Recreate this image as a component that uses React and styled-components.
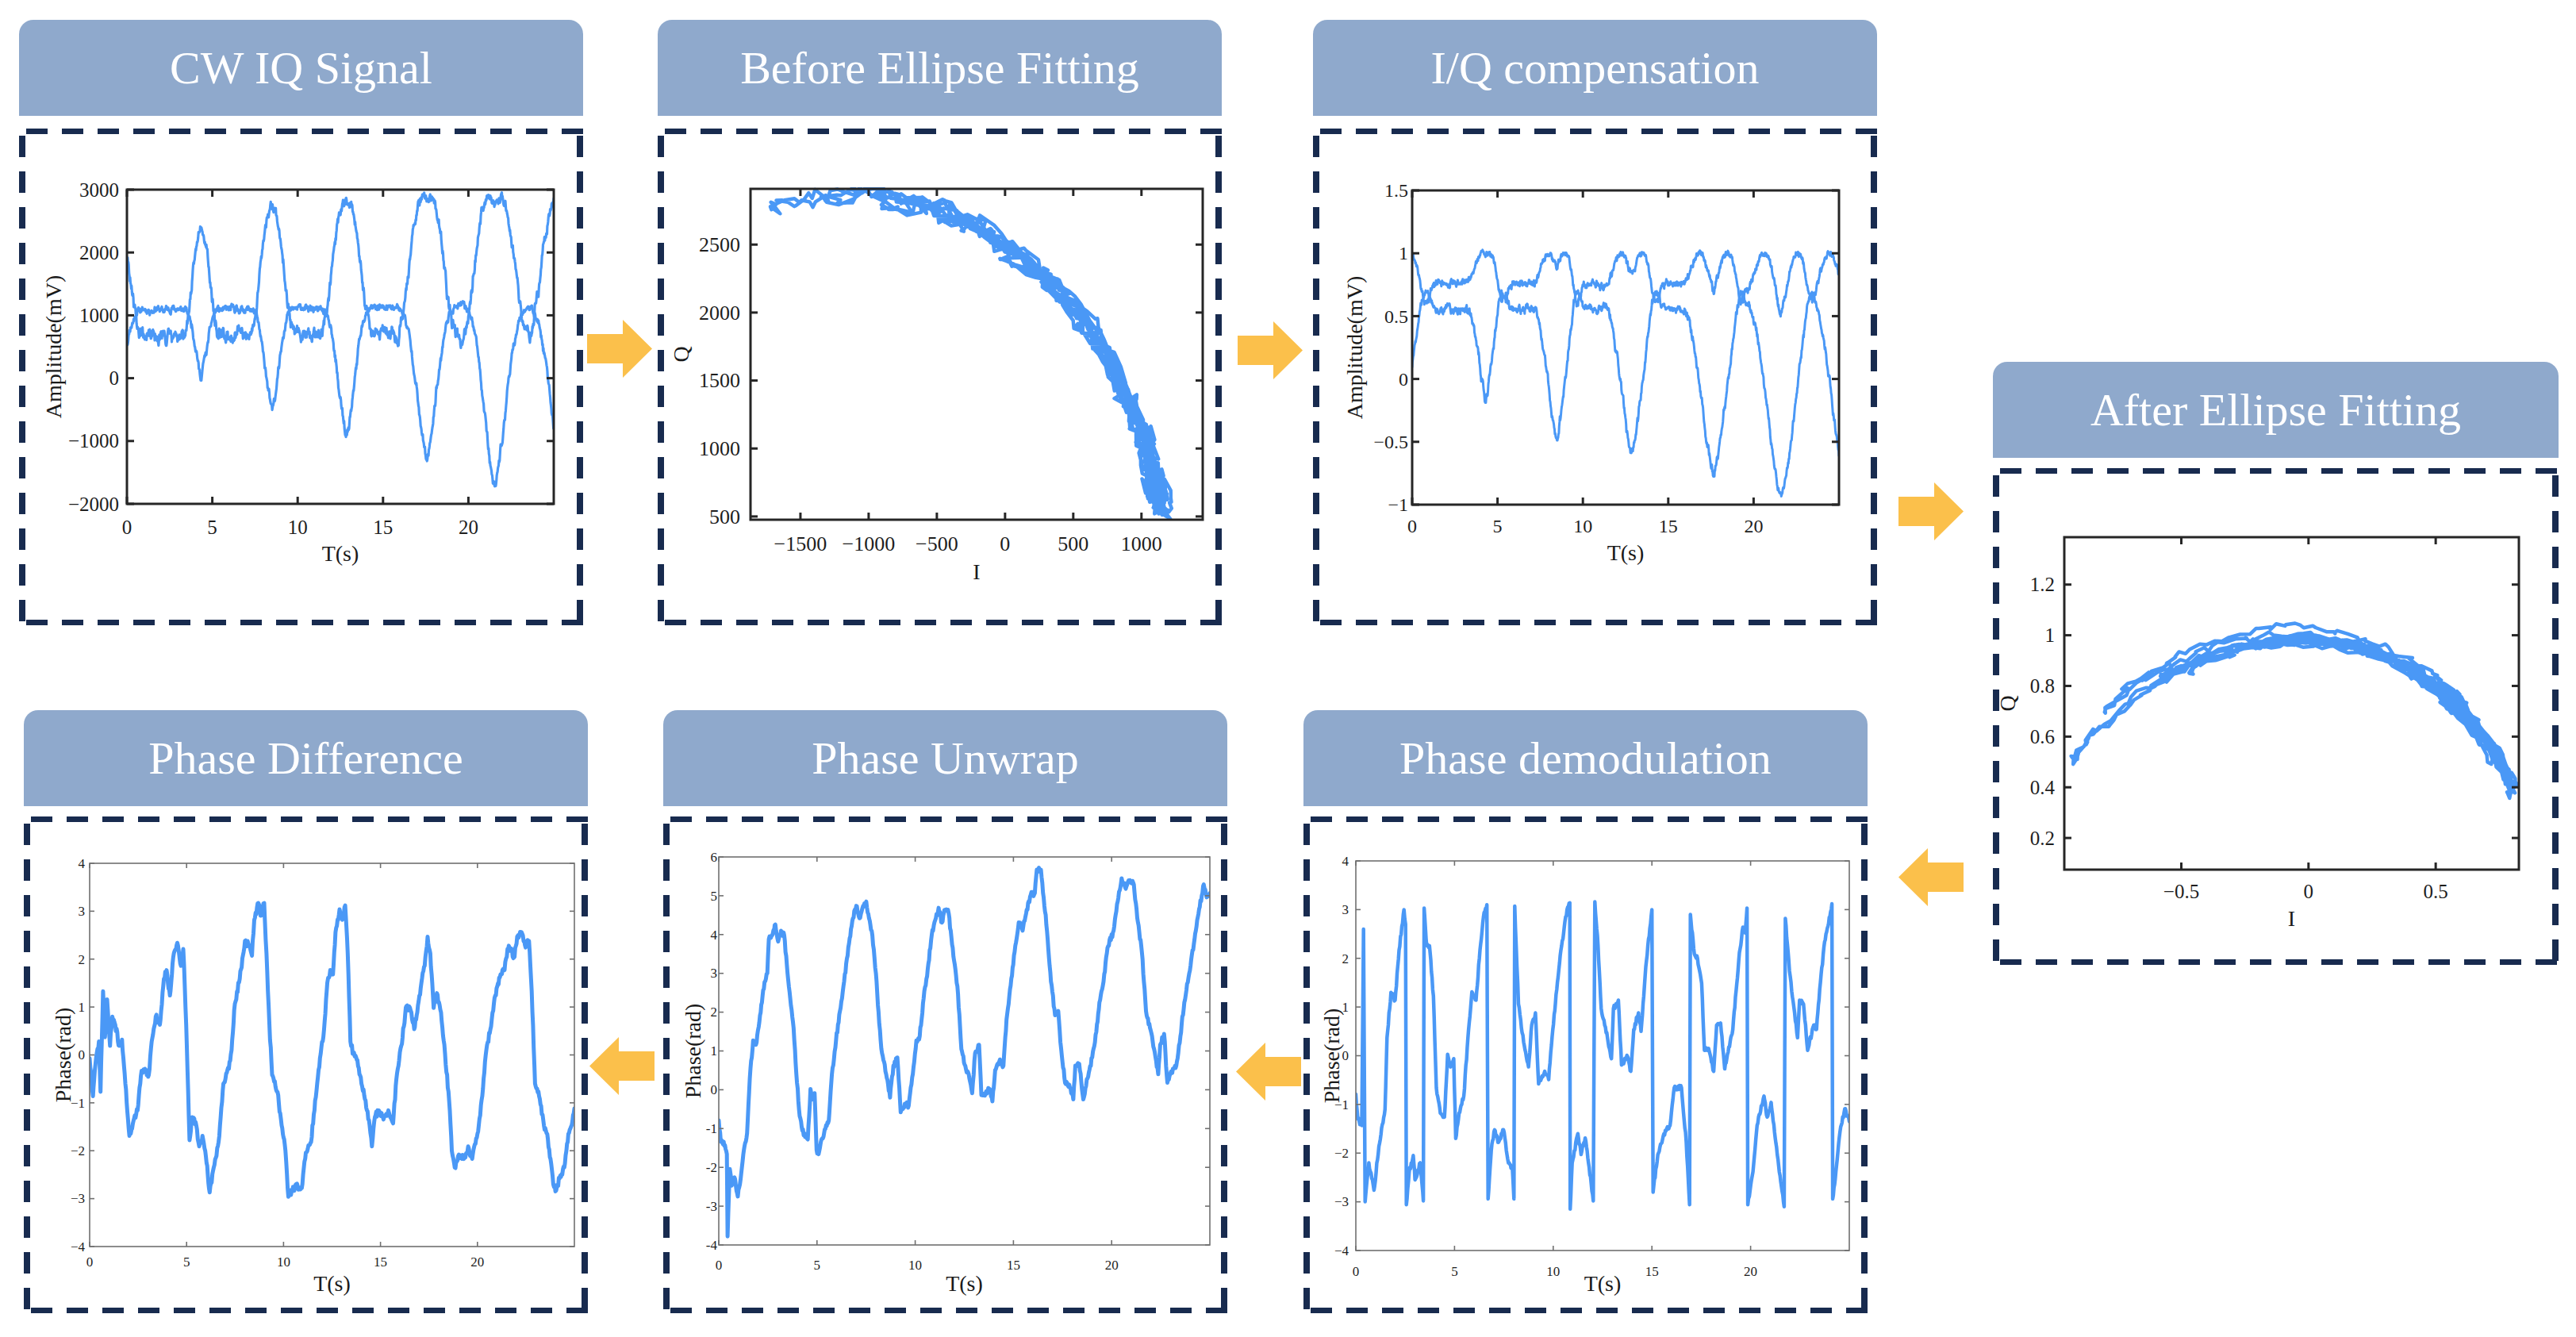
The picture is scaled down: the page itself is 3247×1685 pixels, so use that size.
import React from 'react';
import styled, { createGlobalStyle } from 'styled-components';

const NAVY = '#182b4f';
const BLUE = '#4a98f6';
const AMBER = '#fbc04b';
const HEAD = '#8fa9cc';

const GlobalStyle = createGlobalStyle`
  html, body { margin: 0; padding: 0; background: #fff; }
  body { font-family: "Liberation Serif", "Times New Roman", serif; }
`;

// ---------- data helpers ----------
const rand = (seed) => {
  let s = seed >>> 0;
  return () => {
    s = (Math.imul(s, 1664525) + 1013904223) >>> 0;
    return s / 4294967296;
  };
};

// AR(1) noise, roughly unit std
function ar(n, seed, a) {
  const r = rand(seed);
  let v = 0;
  const out = new Array(n);
  for (let i = 0; i < n; i++) {
    v = a * v + (r() * 2 - 1);
    out[i] = (v * Math.sqrt(1 - a * a)) / 0.577;
  }
  return out;
}

const bump = (x, w) => {
  const u = Math.abs(x) / w;
  return u >= 1 ? 0 : Math.pow(1 - Math.pow(u, 1.4), 1.8);
};

const deg = Math.PI / 180;
const N = 1200;
const T = Array.from({ length: N }, (_, i) => (25 * i) / (N - 1));

// raw IQ (CW IQ Signal)
const P1_PULSES = [
  [-0.4, 60, 1.2], [4.35, 61, 1.05], [8.5, 76, 1.3], [12.85, 86, 1.5],
  [17.55, 95, 1.75], [21.55, 106, 1.9], [25.45, 104, 1.9],
];

function buildRaw() {
  const nA = ar(N, 11, 0.6), nB = ar(N, 23, 0.55), nR = ar(N, 37, 0.997), nS = ar(N, 41, 0.85);
  const I = [], Q = [], IQ = [];
  T.forEach((t, i) => {
    let psi = 14;
    P1_PULSES.forEach(([c, m, w]) => { psi += (m - 14) * bump(t - c, w); });
    psi += nS[i] * 1.2;
    const R = 1 + 0.012 * nR[i];
    const iv = -1080 + 2250 * R * Math.cos(psi * deg) + nA[i] * 28;
    const qv = 2830 * R * Math.sin(psi * deg) + nB[i] * 40;
    I.push([t, iv]);
    Q.push([t, qv]);
    IQ.push([iv, qv]);
  });
  return { I, Q, IQ };
}

// compensated IQ
const BASE = 50;
const P3_PULSES = [
  [-0.45, 100, 1.3], [4.3, 95, 1.05], [8.45, 115, 1.3], [12.85, 124, 1.5],
  [17.65, 134, 1.75], [21.6, 149, 1.9], [25.45, 146, 1.9],
];

function theta(t, dip) {
  let th = BASE;
  P3_PULSES.forEach(([c, m, w]) => {
    th += (m - BASE) * bump(t - c, w);
    th -= dip * Math.exp(-(((t - (c + w * 0.9)) / 0.35) ** 2));
  });
  return th;
}

function buildComp() {
  const n1 = ar(N, 53, 0.8), n2 = ar(N, 59, 0.5), n3 = ar(N, 61, 0.5), nR = ar(N, 67, 0.997);
  const I = [], Q = [], arc = [];
  T.forEach((t, i) => {
    const th = (theta(t, 12) + n1[i] * 1.3) * deg;
    const a = 0.94 + 0.1 * Math.max(0, -Math.cos(th));
    I.push([t, -0.05 + a * Math.cos(th) + n2[i] * 0.012]);
    Q.push([t, -0.02 + 1.02 * Math.sin(th) + n3[i] * 0.012]);
    const ph = (theta(t, 26) + n1[i] * 1.3) * deg;
    const R = 1 + 0.018 * nR[i];
    const b = 0.94 + 0.14 * Math.max(0, -Math.cos(ph));
    arc.push([-0.04 + b * R * Math.cos(ph) + n2[i] * 0.008, -0.02 + 1.02 * R * Math.sin(ph) + n3[i] * 0.008]);
  });
  return { I, Q, arc };
}

function densify(kp, seed, amp) {
  const r = rand(seed);
  const out = [];
  for (let k = 0; k < kp.length - 1; k++) {
    const [t0, v0] = kp[k];
    const [t1, v1] = kp[k + 1];
    const steps = Math.max(1, Math.round(Math.abs(t1 - t0) / 0.035));
    for (let s = 0; s < steps; s++) {
      const f = s / steps;
      out.push([t0 + (t1 - t0) * f, v0 + (v1 - v0) * f + (s ? (r() * 2 - 1) * amp : 0)]);
    }
  }
  out.push(kp[kp.length - 1]);
  return out;
}

const DIFF_KP = [
  [0, -0.07], [0.17, -0.86], [0.33, -0.07], [0.48, 0.28], [0.56, -0.77], [0.69, 1.33], [0.79, 0.37], [0.9, 1.16],
  [1.05, 0.19], [1.17, 0.8], [1.32, 0.63], [1.53, 0.19], [1.67, 0.32], [1.84, -0.6], [2.05, -1.69], [2.26, -1.38],
  [2.47, -1.16], [2.68, -0.33], [2.85, -0.29], [3.05, -0.42], [3.2, 0.28], [3.41, 0.8], [3.62, 0.63], [3.83, 1.59],
  [3.97, 1.77], [4.14, 1.24], [4.31, 2.03], [4.52, 2.34], [4.71, 1.86], [4.83, 2.21], [4.98, 0.63], [5.15, -1.78],
  [5.29, -1.3], [5.5, -1.47], [5.65, -1.91], [5.82, -1.69], [6.03, -2.26], [6.19, -2.87], [6.4, -2.35], [6.65, -1.82],
  [6.9, -0.6], [7.18, -0.29], [7.32, 0.1], [7.49, 1.07], [7.74, 1.59], [8.01, 2.38], [8.22, 2.29], [8.37, 2.07],
  [8.49, 2.82], [8.7, 3.17], [8.85, 2.91], [9.0, 3.17], [9.12, 2.12], [9.27, 0.63], [9.41, -0.42], [9.69, -0.77],
  [9.9, -1.47], [10.1, -2.0], [10.25, -2.96], [10.42, -2.83], [10.73, -2.74], [10.94, -2.78], [11.15, -2.04],
  [11.42, -1.82], [11.63, -0.95], [11.88, -0.07], [12.09, 0.54], [12.26, 1.51], [12.41, 1.77], [12.55, 1.68],
  [12.68, 2.56], [12.89, 3.04], [13.03, 2.82], [13.18, 3.12], [13.31, 2.12], [13.45, 0.28], [13.6, 0.02],
  [13.81, -0.11], [14.02, -0.6], [14.23, -0.95], [14.44, -1.47], [14.56, -1.91], [14.71, -1.3], [14.92, -1.16],
  [15.19, -1.3], [15.44, -1.21], [15.65, -1.43], [15.82, -0.51], [16.07, 0.19], [16.34, 1.02], [16.59, 0.89],
  [16.74, 0.54], [16.9, 0.89], [17.11, 1.51], [17.28, 1.86], [17.43, 2.47], [17.57, 2.12], [17.74, 0.98],
  [17.91, 1.29], [18.12, 0.89], [18.33, 0.02], [18.54, -0.95], [18.68, -2.0], [18.83, -2.35], [19.04, -2.08],
  [19.31, -2.17], [19.52, -1.91], [19.73, -2.17], [20.0, -1.65], [20.25, -0.86], [20.46, 0.1], [20.67, 0.54],
  [20.92, 1.24], [21.19, 1.68], [21.4, 1.77], [21.55, 2.21], [21.72, 2.21], [21.88, 2.03], [22.05, 2.47],
  [22.24, 2.56], [22.45, 2.29], [22.66, 2.38], [22.8, 1.33], [22.97, -0.6], [23.18, -0.86], [23.43, -1.47],
  [23.6, -1.65], [23.77, -2.17], [23.91, -2.7], [24.06, -2.83], [24.27, -2.52], [24.48, -2.35], [24.69, -1.65],
  [24.9, -1.38], [25.0, -1.12],
];

const UNWRAP_KP = [
  [0, -0.79], [0.1, -1.34], [0.25, -1.34], [0.41, -1.66], [0.45, -3.78], [0.56, -2.04], [0.66, -2.47], [0.8, -2.26],
  [0.97, -2.75], [1.11, -2.31], [1.28, -1.55], [1.44, -1.12], [1.58, 0.29], [1.75, 1.27], [1.89, 1.16], [2.1, 1.92],
  [2.26, 2.57], [2.47, 3.0], [2.55, 3.88], [2.72, 3.98], [2.88, 4.26], [3.02, 3.82], [3.17, 4.1], [3.33, 3.98],
  [3.5, 3.0], [3.64, 2.35], [3.81, 1.6], [3.95, 0.4], [4.12, -0.68], [4.32, -1.17], [4.53, -1.28], [4.67, 0.02],
  [4.77, -0.25], [4.88, -0.09], [4.98, -1.55], [5.08, -1.66], [5.23, -1.28], [5.43, -1.01], [5.6, -0.79],
  [5.76, 0.4], [5.97, 1.27], [6.17, 2.03], [6.38, 2.79], [6.63, 3.77], [6.83, 4.42], [7.0, 4.74], [7.16, 4.42],
  [7.35, 4.74], [7.51, 4.85], [7.65, 4.42], [7.82, 3.98], [8.0, 3.0], [8.17, 1.7], [8.31, 0.94], [8.52, 0.4],
  [8.72, -0.2], [8.89, 0.62], [9.09, 0.83], [9.26, -0.58], [9.47, -0.36], [9.67, -0.41], [9.88, 0.4], [10.06, 1.27],
  [10.23, 1.38], [10.43, 2.35], [10.64, 3.11], [10.84, 3.98], [11.05, 4.42], [11.19, 4.69], [11.36, 4.31],
  [11.52, 4.64], [11.67, 4.64], [11.81, 4.1], [11.98, 3.33], [12.18, 2.46], [12.35, 1.05], [12.55, 0.62],
  [12.76, 0.29], [12.9, -0.09], [13.05, 0.94], [13.25, 1.16], [13.37, -0.14], [13.58, -0.09], [13.79, 0.02],
  [13.93, -0.3], [14.07, 0.51], [14.28, 0.73], [14.49, 0.62], [14.65, 1.81], [14.86, 2.68], [15.06, 3.55],
  [15.27, 4.31], [15.47, 4.1], [15.68, 4.64], [15.88, 5.02], [16.09, 5.07], [16.19, 5.67], [16.4, 5.67],
  [16.54, 4.96], [16.71, 4.1], [16.91, 2.79], [17.12, 1.92], [17.28, 2.03], [17.43, 1.05], [17.63, 0.18],
  [17.84, 0.13], [18.05, -0.25], [18.15, 0.62], [18.35, 0.67], [18.56, -0.25], [18.77, 0.29], [19.01, 0.83],
  [19.22, 1.49], [19.38, 2.25], [19.59, 2.79], [19.79, 3.66], [20.1, 4.1], [20.31, 4.85], [20.51, 5.45],
  [20.72, 5.18], [20.93, 5.4], [21.13, 5.29], [21.34, 4.31], [21.54, 3.55], [21.75, 2.03], [21.95, 1.6],
  [22.16, 1.05], [22.37, 0.4], [22.47, 1.16], [22.67, 1.44], [22.84, 0.18], [23.05, 0.45], [23.29, 0.62],
  [23.5, 1.38], [23.7, 2.25], [23.95, 3.0], [24.22, 3.88], [24.42, 4.53], [24.69, 5.29], [24.84, 4.96], [25.0, 5.07],
];

const DEMOD_KP = [
  [0, -0.79], [0.1, -1.3], [0.3, -1.43], [0.39, 2.6], [0.47, -3.0], [0.66, -2.2], [0.92, -2.76], [1.17, -1.86],
  [1.48, -1.1], [1.58, 0.37], [1.78, 1.3], [1.99, 1.14], [2.19, 2.17], [2.44, 3.0], [2.52, 2.7], [2.56, -3.06],
  [2.7, -2.4], [2.91, -2.05], [3.0, -2.55], [3.26, -2.2], [3.42, -2.98], [3.46, 3.03], [3.59, 2.26], [3.73, 2.26],
  [3.93, 1.23], [4.08, -0.66], [4.28, -1.18], [4.49, -1.26], [4.65, 0.03], [4.8, -0.23], [4.96, -0.06], [5.06, -1.7],
  [5.23, -1.18], [5.47, -0.83], [5.68, 0.37], [5.88, 1.31], [6.09, 1.14], [6.29, 2.17], [6.5, 2.94], [6.64, 3.1],
  [6.7, -2.94], [6.86, -1.95], [7.03, -1.52], [7.23, -1.78], [7.48, -1.52], [7.73, -2.2], [7.93, -2.3], [8.01, -2.94],
  [8.05, 3.07], [8.24, 1.06], [8.5, 0.28], [8.75, -0.23], [8.91, 0.63], [9.1, 0.88], [9.26, -0.58], [9.57, -0.32],
  [9.77, -0.49], [9.98, 0.54], [10.18, 1.36], [10.39, 2.17], [10.7, 3.0], [10.84, 3.14], [10.86, -3.15],
  [10.96, -2.2], [11.25, -1.6], [11.41, -2.03], [11.62, -1.69], [11.82, -2.29], [12.03, -2.98], [12.11, 3.16],
  [12.27, 2.26], [12.43, 0.97], [12.75, 0.37], [12.95, -0.06], [13.05, 0.97], [13.3, 1.14], [13.46, -0.19],
  [13.77, -0.02], [13.93, -0.32], [14.08, 0.54], [14.32, 0.88], [14.45, 0.5], [14.69, 1.83], [15.0, 3.0],
  [15.06, -2.8], [15.3, -2.03], [15.61, -1.6], [15.92, -1.43], [16.13, -0.66], [16.5, -0.66], [16.74, -1.78],
  [16.91, -3.06], [16.95, 2.9], [17.15, 2.09], [17.31, 2.0], [17.52, 1.49], [17.66, 0.11], [17.87, 0.15],
  [18.13, -0.32], [18.28, 0.63], [18.48, 0.67], [18.69, -0.27], [19.1, 0.54], [19.4, 1.96], [19.61, 2.64],
  [19.73, 2.52], [19.82, 3.03], [19.86, -3.06], [20.12, -2.38], [20.33, -1.43], [20.68, -0.83], [20.84, -1.26],
  [21.04, -0.96], [21.35, -2.03], [21.7, -3.1], [21.76, 2.82], [21.97, 1.74], [22.23, 0.88], [22.38, 0.37],
  [22.48, 1.14], [22.68, 1.06], [22.89, 0.11], [23.2, 0.63], [23.34, 0.54], [23.5, 1.36], [23.75, 2.34],
  [24.02, 2.86], [24.12, 3.12], [24.16, -2.94], [24.32, -2.38], [24.53, -1.56], [24.77, -1.09], [25.0, -1.35],
];

const RAW = buildRaw();
const COMP = buildComp();

const fmtM = (v) => String(v).replace('-', '\u2212');
const fmtH = (v) => String(v);

const CHARTS = {
  cw: {
    id: 'c-cw', w: 711, h: 626, plot: [136, 77, 674, 473], xlim: [0, 25], ylim: [-2000, 3000],
    xticks: [0, 5, 10, 15, 20], yticks: [-2000, -1000, 0, 1000, 2000, 3000], fmt: fmtM,
    series: [RAW.I, RAW.Q], lw: 3.2, tickFont: 25, labelFont: 28, xtDy: 38, ytDx: 10, xlDy: 72, ylDx: 92,
    xlabel: 'T(s)', ylabel: 'Amplitude(mV)',
  },
  before: {
    id: 'c-before', w: 711, h: 626, plot: [117, 76, 687, 493], xlim: [-1866, 1449], ylim: [476, 2910],
    xticks: [-1500, -1000, -500, 0, 500, 1000], yticks: [500, 1000, 1500, 2000, 2500], fmt: fmtM,
    series: [RAW.IQ], lw: 4.5, tickFont: 26, labelFont: 28, xtDy: 39, ytDx: 13, xlDy: 75, ylDx: 87,
    xlabel: 'I', ylabel: 'Q',
  },
  comp: {
    id: 'c-comp', w: 711, h: 626, plot: [125, 78, 663, 474], xlim: [0, 25], ylim: [-1, 1.5],
    xticks: [0, 5, 10, 15, 20], yticks: [-1, -0.5, 0, 0.5, 1, 1.5], fmt: fmtM,
    series: [COMP.I, COMP.Q], lw: 3, tickFont: 24, labelFont: 28, xtDy: 35, ytDx: 5, xlDy: 70, ylDx: 72,
    xlabel: 'T(s)', ylabel: 'Amplitude(mV)',
  },
  after: {
    id: 'c-after', w: 713, h: 626, plot: [90, 87, 663, 506], xlim: [-0.96, 0.827], ylim: [0.075, 1.387],
    xticks: [-0.5, 0, 0.5], yticks: [0.2, 0.4, 0.6, 0.8, 1, 1.2], fmt: fmtM,
    series: [COMP.arc], lw: 4.5, tickFont: 25, labelFont: 28, xtDy: 36, ytDx: 12, xlDy: 71, ylDx: 71,
    xlabel: 'I', ylabel: 'Q',
  },
  diff: {
    id: 'c-diff', w: 711, h: 626, plot: [83, 59, 694, 542], xlim: [0, 25], ylim: [-4, 4], thin: true,
    xticks: [0, 5, 10, 15, 20], yticks: [-4, -3, -2, -1, 0, 1, 2, 3, 4], fmt: fmtM,
    series: [densify(DIFF_KP, 71, 0.07)], lw: 5, tickFont: 17, labelFont: 28, xtDy: 25, ytDx: 6, xlDy: 56, ylDx: 33,
    xlabel: 'T(s)', ylabel: 'Phase(rad)',
  },
  unwrap: {
    id: 'c-unwrap', w: 711, h: 626, plot: [70, 51, 689, 540], xlim: [0, 25], ylim: [-4, 6], thin: true,
    xticks: [0, 5, 10, 15, 20], yticks: [-4, -3, -2, -1, 0, 1, 2, 3, 4, 5, 6], fmt: fmtH,
    series: [densify(UNWRAP_KP, 73, 0.07)], lw: 5, tickFont: 17, labelFont: 28, xtDy: 31, ytDx: 2, xlDy: 58, ylDx: 32,
    xlabel: 'T(s)', ylabel: 'Phase(rad)',
  },
  demod: {
    id: 'c-demod', w: 711, h: 626, plot: [66, 56, 688, 547], xlim: [0, 25], ylim: [-4, 4], thin: true,
    xticks: [0, 5, 10, 15, 20], yticks: [-4, -3, -2, -1, 0, 1, 2, 3, 4], fmt: fmtM,
    series: [densify(DEMOD_KP, 79, 0.05)], lw: 4.5, tickFont: 17, labelFont: 28, xtDy: 32, ytDx: 9, xlDy: 51, ylDx: 30,
    xlabel: 'T(s)', ylabel: 'Phase(rad)',
  },
};

// ---------- layout ----------
const Page = styled.main`
  width: 3247px;
  height: 1685px;
  box-sizing: border-box;
  padding: 25px 0 0 24px;
  display: grid;
  grid-template-columns: 711px 94px 711px 115px 711px 146px 713px;
  grid-template-rows: 763px 760px;
  row-gap: 107px;
  background: #fff;
`;

const PanelWrap = styled.section`
  grid-column: ${(p) => p.$col};
  grid-row: ${(p) => p.$row};
  align-self: start;
  margin: ${(p) => p.$top || 0}px 0 0 ${(p) => p.$shift || 0}px;
  width: ${(p) => p.$w}px;
  display: flex;
  flex-direction: column;
  gap: ${(p) => p.$gap}px;
`;

const Header = styled.header`
  height: 121px;
  background: ${HEAD};
  border-radius: 18px 18px 0 0;
  display: flex;
  align-items: center;
  justify-content: center;
  color: #fff;
  font-family: "Liberation Serif", "Times New Roman", serif;
  font-size: 58px;
  white-space: nowrap;
`;

const dashH = `repeating-linear-gradient(90deg, transparent 0 9px, ${NAVY} 9px 36px, transparent 36px 45px)`;
const dashV = `repeating-linear-gradient(180deg, transparent 0 9px, ${NAVY} 9px 36px, transparent 36px 45px)`;

const DashBox = styled.div`
  height: 626px;
  background:
    ${dashH} left top / 100% 7px no-repeat,
    ${dashH} left bottom / 100% 7px no-repeat,
    ${dashV} left top / 8px 100% no-repeat,
    ${dashV} right top / 8px 100% no-repeat;
`;

const ArrowSlot = styled.div`
  grid-column: ${(p) => p.$col};
  grid-row: ${(p) => p.$row};
  display: flex;
  flex-direction: column;
  align-items: flex-start;
  padding: ${(p) => p.$top}px 0 0 ${(p) => p.$left}px;
  gap: ${(p) => p.$gap || 0}px;
`;

const ChartSvg = styled.svg`
  display: block;
  font-family: "Liberation Serif", "Times New Roman", serif;
`;

function Arrow({ dir }) {
  const pts = dir === 'right'
    ? '0,18 45,18 45,0 82,36.5 45,73 45,55 0,55'
    : '82,18 37,18 37,0 0,36.5 37,73 37,55 82,55';
  return (
    <svg width="82" height="73" viewBox="0 0 82 73">
      <polygon points={pts} fill={AMBER} />
    </svg>
  );
}

const toPath = (pts, sx, sy) =>
  pts.map(([x, y], i) => `${i ? 'L' : 'M'}${sx(x).toFixed(1)} ${sy(y).toFixed(1)}`).join('');

function Chart({ c }) {
  const [x0, y0, x1, y1] = c.plot;
  const sx = (v) => x0 + ((v - c.xlim[0]) / (c.xlim[1] - c.xlim[0])) * (x1 - x0);
  const sy = (v) => y1 - ((v - c.ylim[0]) / (c.ylim[1] - c.ylim[0])) * (y1 - y0);
  const axisColor = c.thin ? '#707070' : '#262626';
  const aw = c.thin ? 1.6 : 3;
  const tk = c.thin ? 6 : 9;
  const ylx = x0 - c.ylDx + c.labelFont * 0.33;
  return (
    <ChartSvg width={c.w} height={c.h}>
      <defs>
        <clipPath id={c.id}>
          <rect x={x0} y={y0 - 2} width={x1 - x0} height={y1 - y0 + 2} />
        </clipPath>
      </defs>
      <g clipPath={`url(#${c.id})`} fill="none" stroke={BLUE} strokeWidth={c.lw} strokeLinejoin="round" strokeLinecap="round">
        {c.series.map((s, i) => <path key={i} d={toPath(s, sx, sy)} />)}
      </g>
      <g stroke={axisColor} strokeWidth={aw} fill="none">
        <rect x={x0} y={y0} width={x1 - x0} height={y1 - y0} />
        {c.xticks.map((v) => (
          <g key={`x${v}`}>
            <line x1={sx(v)} x2={sx(v)} y1={y1} y2={y1 - tk} />
            <line x1={sx(v)} x2={sx(v)} y1={y0} y2={y0 + tk} />
          </g>
        ))}
        {c.yticks.map((v) => (
          <g key={`y${v}`}>
            <line x1={x0} x2={x0 + tk} y1={sy(v)} y2={sy(v)} />
            <line x1={x1} x2={x1 - tk} y1={sy(v)} y2={sy(v)} />
          </g>
        ))}
      </g>
      <g fill="#1e1e1e" fontSize={c.tickFont}>
        {c.xticks.map((v) => (
          <text key={`xl${v}`} x={sx(v)} y={y1 + c.xtDy} textAnchor="middle">{c.fmt(v)}</text>
        ))}
        {c.yticks.map((v) => (
          <text key={`yl${v}`} x={x0 - c.ytDx} y={sy(v) + c.tickFont * 0.34} textAnchor="end">{c.fmt(v)}</text>
        ))}
      </g>
      <g fill="#1a1a1a" fontSize={c.labelFont}>
        <text x={(x0 + x1) / 2} y={y1 + c.xlDy} textAnchor="middle">{c.xlabel}</text>
        <text transform={`translate(${ylx} ${(y0 + y1) / 2}) rotate(-90)`} textAnchor="middle">{c.ylabel}</text>
      </g>
    </ChartSvg>
  );
}

function Panel({ col, row, title, chart, top, shift, w = 711, gap = 16 }) {
  return (
    <PanelWrap $col={col} $row={row} $top={top} $shift={shift} $w={w} $gap={gap}>
      <Header>{title}</Header>
      <DashBox>
        <Chart c={chart} />
      </DashBox>
    </PanelWrap>
  );
}

export default function App() {
  return (
    <>
      <GlobalStyle />
      <Page>
        <Panel col={1} row={1} title="CW IQ Signal" chart={CHARTS.cw} />
        <ArrowSlot $col={2} $row={1} $top={378} $left={5}>
          <Arrow dir="right" />
        </ArrowSlot>
        <Panel col={3} row={1} title="Before Ellipse Fitting" chart={CHARTS.before} />
        <ArrowSlot $col={4} $row={1} $top={380} $left={20}>
          <Arrow dir="right" />
        </ArrowSlot>
        <Panel col={5} row={1} title="I/Q compensation" chart={CHARTS.comp} />
        <ArrowSlot $col={6} $row="1 / span 2" $top={583} $left={27} $gap={388}>
          <Arrow dir="right" />
          <Arrow dir="left" />
        </ArrowSlot>
        <Panel col={7} row="1 / span 2" title="After Ellipse Fitting" chart={CHARTS.after} top={431} w={713} gap={13} />

        <Panel col={1} row={2} title="Phase Difference" chart={CHARTS.diff} shift={6} gap={13} />
        <ArrowSlot $col={2} $row={2} $top={412} $left={8}>
          <Arrow dir="left" />
        </ArrowSlot>
        <Panel col={3} row={2} title="Phase Unwrap" chart={CHARTS.unwrap} shift={7} gap={13} />
        <ArrowSlot $col={4} $row={2} $top={419} $left={18}>
          <Arrow dir="left" />
        </ArrowSlot>
        <Panel col={5} row={2} title="Phase demodulation" chart={CHARTS.demod} shift={-12} gap={13} />
      </Page>
    </>
  );
}
